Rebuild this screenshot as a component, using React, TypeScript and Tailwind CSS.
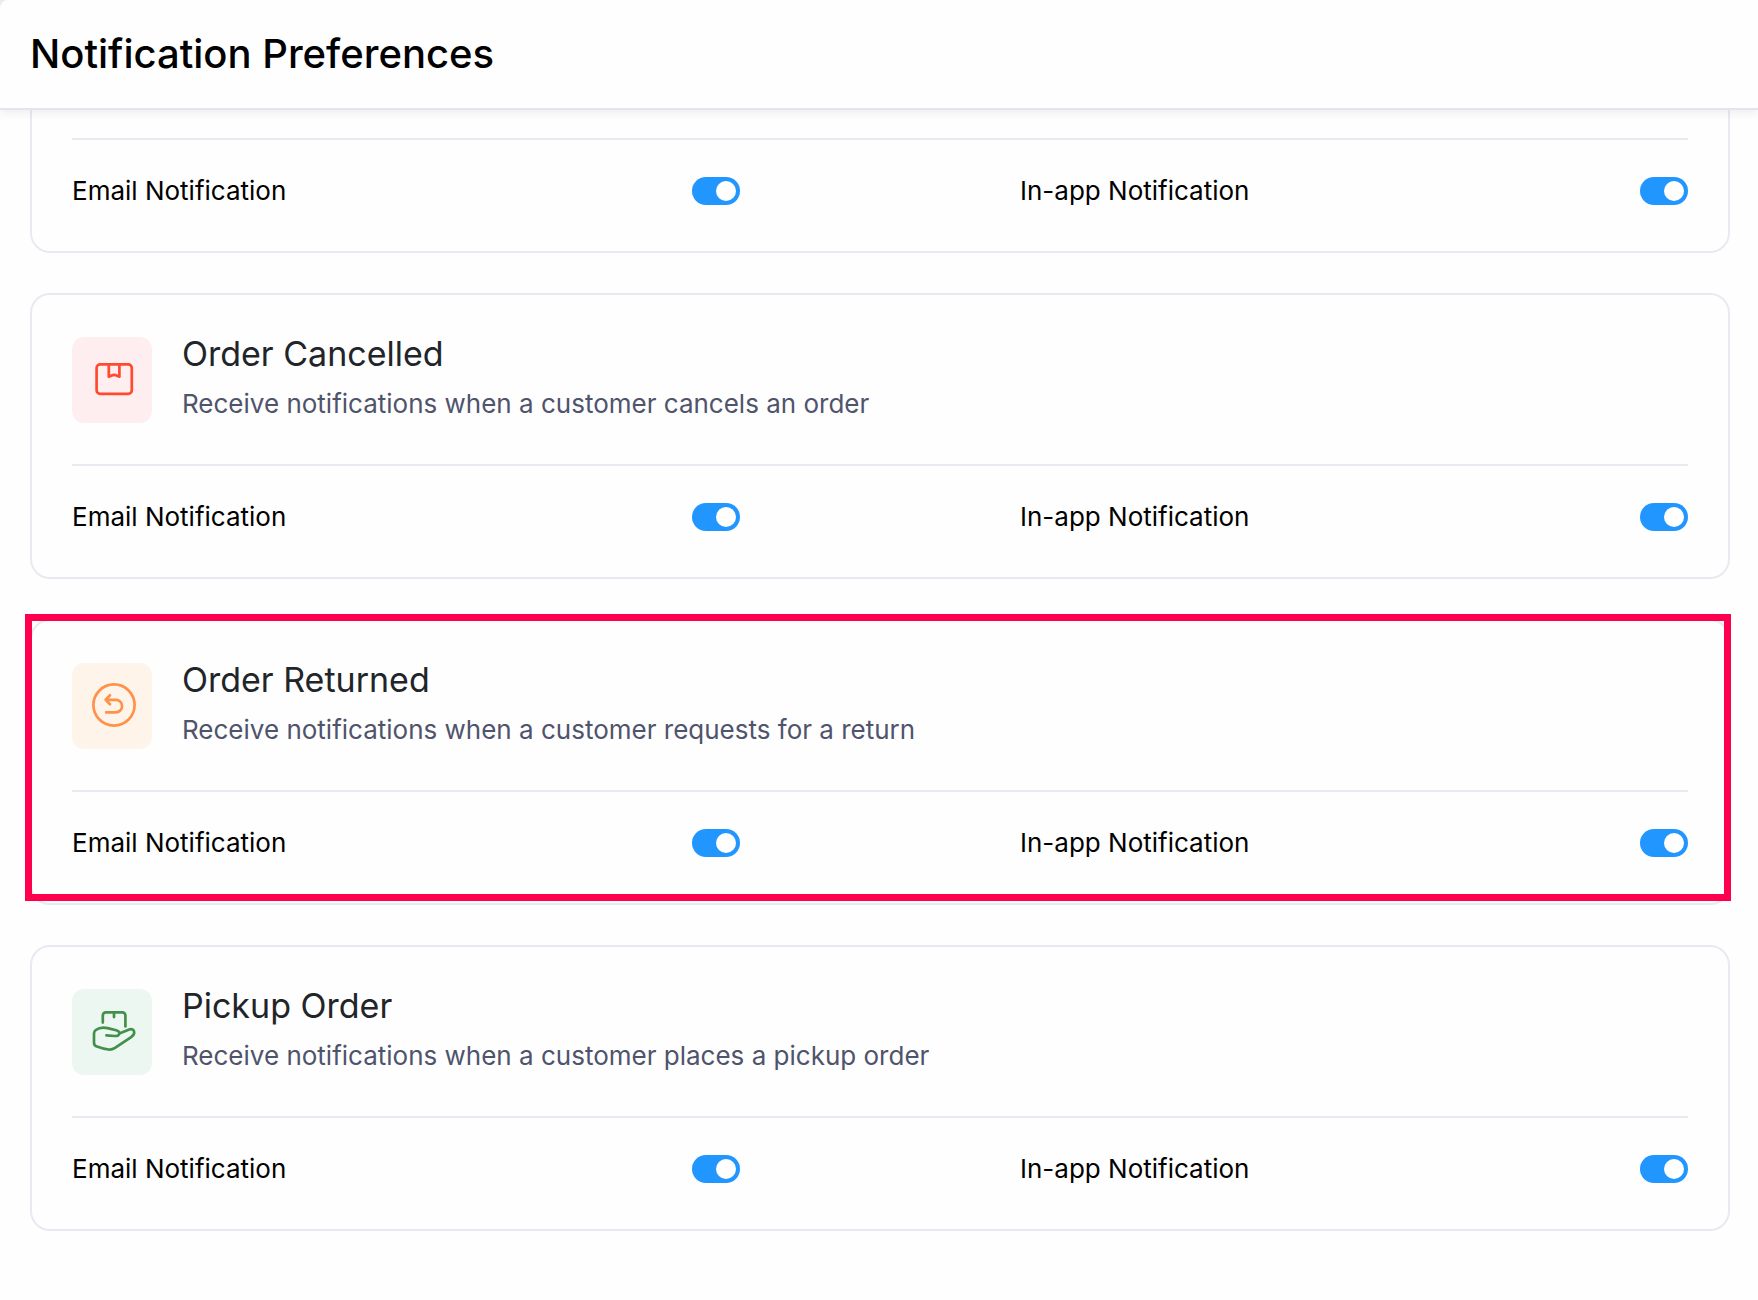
import { useState, type ReactNode } from "react";

function CancelledIcon() {
  return (
    <svg viewBox="0 0 80 86" fill="none" stroke="#ff4a2e" strokeWidth="2.7" strokeLinejoin="round" aria-hidden="true">
      <rect x="24.6" y="27.3" width="35.2" height="29.6" rx="3.6" />
      <path d="M36.8 27.5v12.2c1.6 0 2.8-1.9 5.3-1.9s3.7 1.9 5.3 1.9V27.5" />
    </svg>
  );
}

function ReturnedIcon() {
  return (
    <svg viewBox="0 0 80 86" fill="none" stroke="#ff9149" strokeWidth="2.7" strokeLinecap="round" strokeLinejoin="round" aria-hidden="true">
      <circle cx="42" cy="42" r="20.6" />
      <path d="M38 32.3 33.6 36.8 38 41.2M33.6 36.8h10.2a6.3 6.3 0 0 1 0 12.6H34.2" />
    </svg>
  );
}

function PickupIcon() {
  return (
    <svg viewBox="0 0 80 86" fill="none" stroke="#43904a" strokeWidth="2.7" strokeLinecap="round" strokeLinejoin="round" aria-hidden="true">
      <path d="M30.8 33.6V26.4a3 3 0 0 1 3-3h16.6a3 3 0 0 1 3 3v11M42 23.5v4.6" />
      <path d="M34.4 46.4l8.4.6c3 .2 4.6-1 4.6-2.7s-1.2-2.6-3.2-3.1L35.6 39.1c-4-.9-9.2 0-11.8 1.9-1.3 1-1.8 2-1.8 3.6v9.2c0 1.6.6 2.8 2.2 3.4 3.2 1.2 7.6 2.6 12.2 3.3 2.6.4 4.4-.2 6.6-1.6l15.8-10.6c2.2-1.4 3.6-3 3.4-5.2-.2-2.5-2.6-3.6-5-2.6L47.4 44.6" />
    </svg>
  );
}

function NotificationToggle({ label }: { label: string }) {
  const [enabled, setEnabled] = useState(true);

  return (
    <label className="flex cursor-pointer items-center justify-between">
      <span className="text-[26px] leading-[38px] text-black">{label}</span>
      <input
        type="checkbox"
        role="switch"
        checked={enabled}
        onChange={(e) => setEnabled(e.target.checked)}
        className="h-7 w-12 shrink-0 cursor-pointer appearance-none rounded-full bg-gray-300 p-1 before:block before:size-5 before:rounded-full before:bg-white checked:bg-[#2196ff] checked:before:ml-5"
      />
    </label>
  );
}

function ChannelRow() {
  return (
    <div className="grid grid-cols-2 gap-[280px] border-t-2 border-[#e9e9f1] pt-8">
      <NotificationToggle label="Email Notification" />
      <NotificationToggle label="In-app Notification" />
    </div>
  );
}

type PreferenceCardProps = {
  title: string;
  description: string;
  icon: ReactNode;
  iconBackground: string;
  highlighted?: boolean;
};

function PreferenceCard({ title, description, icon, iconBackground, highlighted }: PreferenceCardProps) {
  return (
    <section className="relative rounded-[20px] border-2 border-[#e9e9f1] px-10 pt-[42px] pb-[41px]">
      <div className="mb-[41px] flex gap-[30px]">
        <div className={`h-[86px] w-20 shrink-0 rounded-xl ${iconBackground}`}>{icon}</div>
        <div>
          <h2 className="text-[34px] leading-[34px] text-[#212529]">{title}</h2>
          <p className="mt-[15px] text-[26px] leading-9 text-[#4f546c]">{description}</p>
        </div>
      </div>
      <ChannelRow />
      {highlighted && (
        <div className="pointer-events-none absolute -top-[7px] -right-[3px] bottom-0.5 -left-[7px] border-7 border-[#ff004f]" />
      )}
    </section>
  );
}

export default function App() {
  return (
    <div className="min-h-screen bg-[#fefefe] font-['Inter',sans-serif]">
      <div className="bg-[#ececec]">
        <header className="relative rounded-tl-lg border-b-2 border-[#e4e4ee] bg-[#fefefe] px-[30px] py-[27px] shadow-[0_4px_8px_rgba(0,0,0,0.06)]">
          <h1 className="text-[40px] leading-[54px] font-medium text-black">Notification Preferences</h1>
        </header>
      </div>
      <main className="flex flex-col gap-10 pr-7 pb-16 pl-[30px]">
        <section className="rounded-b-[20px] border-2 border-t-0 border-[#e9e9f1] px-10 pt-7 pb-[41px]">
          <ChannelRow />
        </section>
        <PreferenceCard
          title="Order Cancelled"
          description="Receive notifications when a customer cancels an order"
          icon={<CancelledIcon />}
          iconBackground="bg-[#ffeeef]"
        />
        <PreferenceCard
          title="Order Returned"
          description="Receive notifications when a customer requests for a return"
          icon={<ReturnedIcon />}
          iconBackground="bg-[#fff4ea]"
          highlighted
        />
        <PreferenceCard
          title="Pickup Order"
          description="Receive notifications when a customer places a pickup order"
          icon={<PickupIcon />}
          iconBackground="bg-[#edf7f2]"
        />
      </main>
    </div>
  );
}
